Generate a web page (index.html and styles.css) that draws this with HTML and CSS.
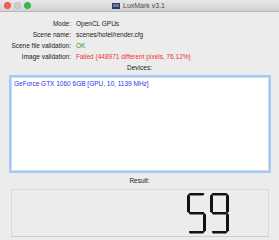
FILE: index.html
```html
<!DOCTYPE html>
<html lang="en">
<head>
  <meta charset="UTF-8" />
  <title>LuxMark v3.1</title>
  <link rel="stylesheet" href="styles.css">
</head>
<body>
  <div class="window">
    <!-- title bar -->
    <div class="titlebar">
      <div class="lights">
        <span class="light red"></span>
        <span class="light grey"></span>
        <span class="light green"></span>
      </div>
      <div class="title">
        <svg class="app-icon" width="8" height="6" viewBox="0 0 8 6">
          <rect x="0" y="0" width="8" height="6" fill="#2f3b57"/>
          <rect x="1" y="1" width="6" height="3" fill="#5b78a8"/>
        </svg>
        <span>LuxMark v3.1</span>
      </div>
    </div>

    <!-- info -->
    <div class="info">
      <span class="label">Mode:</span>
      <span class="value">OpenCL GPUs</span>
      <span class="label">Scene name:</span>
      <span class="value">scenes/hotel/render.cfg</span>
      <span class="label">Scene file validation:</span>
      <span class="value ok">OK</span>
      <span class="label">Image validation:</span>
      <span class="value failed">Failed (448971 different pixels, 76.12%)</span>
    </div>

    <div class="caption">Devices:</div>
    <div class="devices">
      <div class="device">GeForce GTX 1060 6GB [GPU, 10, 1139 MHz]</div>
    </div>

    <div class="caption result-caption">Result:</div>
    <div class="result" aria-label="59" title="59">
      <div class="digit">
        <i class="seg h top"></i>
        <i class="seg v ul"></i>
        <i class="seg h mid"></i>
        <i class="seg v lr"></i>
        <i class="seg h bot"></i>
      </div>
      <div class="digit">
        <i class="seg h top"></i>
        <i class="seg v ul"></i>
        <i class="seg v ur"></i>
        <i class="seg h mid"></i>
        <i class="seg v lr"></i>
        <i class="seg h bot"></i>
      </div>
    </div>
  </div>
</body>
</html>
```

FILE: styles.css
```css
body {
  margin: 0;
  font-family: "Liberation Sans", Arial, sans-serif;
  background-color: #ececec;
}

.window {
  width: 279px;
  height: 240px;
  overflow: hidden;
  background: #ececec;
}

.titlebar {
  height: 11px;
  position: relative;
  display: flex;
  align-items: center;
  justify-content: center;
  background: linear-gradient(#e9e7e9, #d3d1d3);
  border-bottom: 1px solid #b9b7b9;
}

.lights {
  position: absolute;
  left: 4px;
  top: 2px;
  display: flex;
  gap: 3px;
}

.light {
  width: 7px;
  height: 7px;
  border-radius: 50%;
  box-sizing: border-box;
}

.light.red {
  background: #fc5f57;
  border: 0.5px solid #e0443e;
}

.light.grey {
  background: #d0cfd0;
  border: 0.5px solid #bdbcbd;
}

.light.green {
  background: #2dc440;
  border: 0.5px solid #1ea932;
}

.title {
  display: flex;
  align-items: center;
  gap: 3px;
  font-size: 7px;
  color: #4a4a4a;
  margin-left: -2px;
}

.info {
  display: grid;
  grid-template-columns: 71px 1fr;
  column-gap: 5px;
  padding-top: 6px;
  font-size: 6.5px;
  line-height: 11px;
  color: #222;
}

.label {
  text-align: right;
}

.ok {
  color: #2e9b2e;
}

.failed {
  color: #f2302c;
}

.caption {
  text-align: center;
  font-size: 6.5px;
  line-height: 11px;
  color: #222;
}

.devices {
  margin: 2px 8px 0 9px;
  height: 98px;
  box-sizing: border-box;
  border: 2px solid #a6c8f2;
  box-shadow: inset 0 0 0 1px #c4d9f4;
  background: white;
  padding: 2px 3px;
}

.device {
  font-size: 6.5px;
  line-height: 9px;
  color: #2f2ff0;
}

.result-caption {
  margin-top: 2px;
}

.result {
  margin: 3px 10px 0 11px;
  height: 48px;
  box-sizing: border-box;
  border: 1px solid #d9d9d9;
  border-bottom-color: #cfcfcf;
  display: flex;
  justify-content: flex-end;
  align-items: center;
  gap: 4px;
  padding-right: 39px;
}

.digit {
  width: 19px;
  height: 41px;
  display: grid;
  grid-template-columns: 3px 1fr 3px;
  grid-template-rows: 3px 1fr 3px 1fr 3px;
}

.seg {
  background: #111;
  display: block;
}

.seg.h {
  grid-column: 2;
  margin: 0 -1.5px;
  clip-path: polygon(1.5px 0, calc(100% - 1.5px) 0, 100% 50%, calc(100% - 1.5px) 100%, 1.5px 100%, 0 50%);
}

.seg.v {
  margin: -1.5px 0;
  clip-path: polygon(50% 0, 100% 1.5px, 100% calc(100% - 1.5px), 50% 100%, 0 calc(100% - 1.5px), 0 1.5px);
}

.seg.top { grid-row: 1; }
.seg.mid { grid-row: 3; }
.seg.bot { grid-row: 5; }
.seg.ul { grid-column: 1; grid-row: 2; }
.seg.ur { grid-column: 3; grid-row: 2; }
.seg.ll { grid-column: 1; grid-row: 4; }
.seg.lr { grid-column: 3; grid-row: 4; }
```
